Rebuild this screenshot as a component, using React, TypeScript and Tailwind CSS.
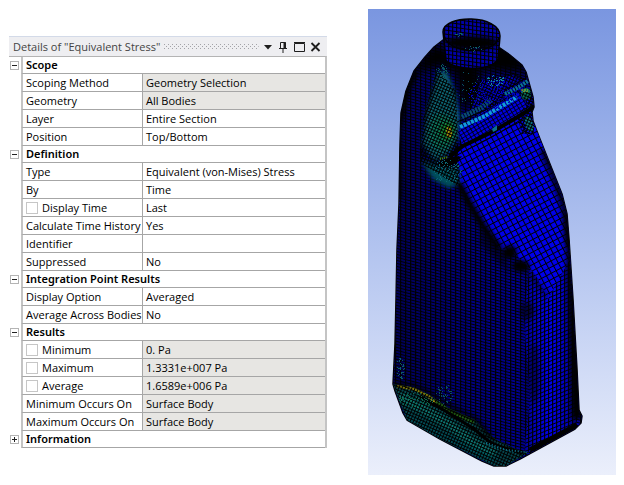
import { useState } from 'react';

interface Row {
  label: string;
  value: string;
  readOnly?: boolean;
  checkable?: boolean;
}

interface Section {
  title: string;
  rows: Row[];
}

const SECTIONS: Section[] = [
  {
    title: 'Scope',
    rows: [
      { label: 'Scoping Method', value: 'Geometry Selection', readOnly: true },
      { label: 'Geometry', value: 'All Bodies', readOnly: true },
      { label: 'Layer', value: 'Entire Section' },
      { label: 'Position', value: 'Top/Bottom' },
    ],
  },
  {
    title: 'Definition',
    rows: [
      { label: 'Type', value: 'Equivalent (von-Mises) Stress' },
      { label: 'By', value: 'Time' },
      { label: 'Display Time', value: 'Last', checkable: true },
      { label: 'Calculate Time History', value: 'Yes' },
      { label: 'Identifier', value: '' },
      { label: 'Suppressed', value: 'No' },
    ],
  },
  {
    title: 'Integration Point Results',
    rows: [
      { label: 'Display Option', value: 'Averaged' },
      { label: 'Average Across Bodies', value: 'No' },
    ],
  },
  {
    title: 'Results',
    rows: [
      { label: 'Minimum', value: '0. Pa', readOnly: true, checkable: true },
      { label: 'Maximum', value: '1.3331e+007 Pa', readOnly: true, checkable: true },
      { label: 'Average', value: '1.6589e+006 Pa', readOnly: true, checkable: true },
      { label: 'Minimum Occurs On', value: 'Surface Body', readOnly: true },
      { label: 'Maximum Occurs On', value: 'Surface Body', readOnly: true },
    ],
  },
  { title: 'Information', rows: [] },
];

function TitleBar() {
  return (
    <div className="flex h-5 items-center border-t border-[#d3dae8] bg-[#eeeef1] pr-1.5 pl-1 text-[#444]">
      <h2 className="text-[11px] leading-4 whitespace-nowrap">Details of "Equivalent Stress"</h2>
      <svg className="mx-1 h-[5px] min-w-0 flex-1" aria-hidden="true">
        <defs>
          <pattern id="grip" width="4" height="4" patternUnits="userSpaceOnUse">
            <rect width="1" height="1" fill="#a3a3a8" />
            <rect x="2" y="2" width="1" height="1" fill="#a3a3a8" />
          </pattern>
        </defs>
        <rect width="100%" height="5" fill="url(#grip)" />
      </svg>
      <div className="flex items-center gap-1 text-[#1e1e1e]">
        <button aria-label="Window position">
          <svg className="block" width="10" height="12" viewBox="0 0 10 12">
            <path d="M1 4h8L5 8.5z" fill="currentColor" />
          </svg>
        </button>
        <button aria-label="Auto hide">
          <svg className="block" width="12" height="12" viewBox="0 0 12 12" fill="none" stroke="currentColor">
            <path d="M3.5 7V1.5h5V7M2 7.5h8M6 7.5V12" />
            <path d="M7.5 1v6" strokeWidth="2" />
          </svg>
        </button>
        <button aria-label="Maximize">
          <svg className="block" width="13" height="12" viewBox="0 0 13 12" fill="none" stroke="currentColor">
            <path d="M1.5 2.5h10v8h-10zM1 1.5h11" />
          </svg>
        </button>
        <button aria-label="Close">
          <svg className="block" width="11" height="12" viewBox="0 0 11 12" stroke="currentColor" strokeWidth="1.8">
            <path d="M1.5 2l8 8M9.5 2l-8 8" />
          </svg>
        </button>
      </div>
    </div>
  );
}

function DetailsPanel() {
  const [collapsed, setCollapsed] = useState<Record<string, boolean>>({ Information: true });

  function toggle(title: string) {
    setCollapsed((prev) => ({ ...prev, [title]: !prev[title] }));
  }

  return (
    <section className="min-w-0 pt-[35px]">
      <TitleBar />
      <table className="w-full table-fixed border-separate border-spacing-0 border-t border-r-2 border-t-[#b4b4b4] border-r-[#c4c4c4] text-left text-[11px] leading-4 text-black">
        <colgroup>
          <col className="w-3" />
          <col className="w-[121px]" />
          <col />
        </colgroup>
        {SECTIONS.map((section) => (
          <tbody key={section.title}>
            <tr className="h-[17px]">
              <td className="p-0">
                <button
                  onClick={() => toggle(section.title)}
                  aria-label={`Toggle ${section.title}`}
                  aria-expanded={!collapsed[section.title]}
                  className="ml-px block size-[9px] border border-[#b4b4b4] bg-white"
                >
                  <svg className="block" width="7" height="7" viewBox="0 0 7 7" stroke="#222">
                    <path d={collapsed[section.title] ? 'M1 3.5h5M3.5 1v5' : 'M1 3.5h5'} />
                  </svg>
                </button>
              </td>
              <th
                colSpan={2}
                className="border-b border-l-2 border-b-[#a6a6a6] border-l-[#c4c4c4] py-0 pl-[3px] font-['Noto_Sans','Open_Sans',sans-serif] font-semibold"
              >
                {section.title}
              </th>
            </tr>
            {!collapsed[section.title] &&
              section.rows.map((row) => (
                <tr key={row.label} className="h-[18px]">
                  <td className="p-0" />
                  <th className="border-b border-l-2 border-b-[#a6a6a6] border-l-[#c4c4c4] py-0 pl-[3px] font-medium whitespace-nowrap">
                    {row.checkable ? (
                      <label className="flex items-center gap-1">
                        <input type="checkbox" className="size-3 appearance-none border border-[#c6c6c6] bg-white checked:bg-[#555]" />
                        {row.label}
                      </label>
                    ) : (
                      row.label
                    )}
                  </th>
                  <td
                    className={`border-b border-l border-[#a6a6a6] py-0 pl-[3px] font-medium whitespace-nowrap ${
                      row.readOnly ? 'bg-[#e7e6e3]' : 'bg-white'
                    }`}
                  >
                    {row.value}
                  </td>
                </tr>
              ))}
          </tbody>
        ))}
      </table>
    </section>
  );
}

const BODY =
  'M443 41 L434 48 L425 58 L414 72 L406 92 L401 114 L400 145 L399 205 L397 250 L396 300 L395 345 L393 385 L395 392 L403 414 L407 421 L440 440 L482 462 L494 467 L506 467 L520 460 L575 430 L581 424 L582 417 L579 411 L577 370 L573 300 L569 240 L567 215 L562 195 L550 165 L540 140 L533 122 L532 113 L534 108 L533 98 L526 73 L522 66 L510 56 L500 49 Z';
const GRIP_FACE =
  'M457 153 L463 146 L492 133 L531 111 L533 122 L550 165 L562 195 L567 215 L569 262 L548 300 L535 275 L515 255 L498 248 L481 222 L465 195 L459 180 Z';
const SIDE_FACE = 'M512 240 L569 225 L573 300 L577 370 L579 412 L575 430 L524 455 L530 400 L524 320 L529 270 Z';
const BASE = 'M393 385 L413 388 L430 396 L448 409 L475 421 L495 440 L520 452 L529 453 L506 467 L494 467 L440 440 L407 421 Z';
const HANDLE = 'M458 133 L463 126 L522 88 L532 103 L529 111 L463 148 Z';

// small repeatable generator so that the speckles stay put between renders
function speckles(seed: number, count: number, cx: number, cy: number, rx: number, ry: number) {
  let s = seed;
  const next = () => {
    s = (s * 16807) % 2147483647;
    return s / 2147483647;
  };
  const points: [number, number][] = [];
  for (let i = 0; i < count; i++) {
    const angle = next() * Math.PI * 2;
    const r = Math.sqrt(next());
    points.push([Math.round(cx + Math.cos(angle) * r * rx), Math.round(cy + Math.sin(angle) * r * ry)]);
  }
  return points;
}

const SPECKLES = [
  { color: '#1283a0', points: speckles(11, 45, 495, 81, 9, 6) },
  { color: '#0a5060', points: speckles(29, 30, 469, 88, 12, 18) },
  { color: '#0c6674', points: speckles(7, 80, 446, 172, 15, 12) },
  { color: '#0a5660', points: speckles(3, 40, 442, 72, 6, 7) },
  { color: '#0c5c68', points: speckles(41, 40, 400, 370, 4, 11) },
  { color: '#0f6a48', points: speckles(17, 60, 416, 400, 18, 8) },
  { color: '#0a4f60', points: speckles(23, 50, 444, 395, 9, 10) },
  { color: '#0000c0', points: speckles(13, 160, 492, 95, 24, 15) },
];

const NECK_SPECKLES = [...speckles(31, 16, 473, 49, 9, 3), ...speckles(43, 10, 459, 35, 4, 2)];

function BottleMesh() {
  return (
    <svg className="block h-auto w-full" viewBox="368 10 248 466" role="img" aria-label="Equivalent stress on a meshed bottle">
      <defs>
        <clipPath id="body">
          <path d={BODY} />
        </clipPath>
        <clipPath id="base">
          <path d={BASE} />
        </clipPath>
        <filter id="soft" x="-50%" y="-50%" width="200%" height="200%">
          <feGaussianBlur stdDeviation="4" />
        </filter>
        <filter id="softer" x="-50%" y="-50%" width="200%" height="200%">
          <feGaussianBlur stdDeviation="2" />
        </filter>
        <linearGradient id="front" x1="0" x2="1">
          <stop offset="0" stopColor="#000058" />
          <stop offset="0.4" stopColor="#000082" />
          <stop offset="1" stopColor="#0000a0" />
        </linearGradient>
        <linearGradient id="side" x1="0" x2="1">
          <stop offset="0" stopColor="#000090" />
          <stop offset="0.3" stopColor="#0000b0" />
          <stop offset="0.55" stopColor="#0000f0" />
          <stop offset="0.8" stopColor="#0000c0" />
          <stop offset="1" stopColor="#000060" />
        </linearGradient>
        <pattern id="mesh-front" width="5" height="3" patternUnits="userSpaceOnUse" patternTransform="skewY(14)">
          <path d="M0 .5h5M.5 0v3" stroke="#000" strokeWidth="1.2" />
        </pattern>
        <pattern id="mesh-side" width="4" height="4" patternUnits="userSpaceOnUse" patternTransform="skewY(-22)">
          <path d="M0 .5h4M.5 0v4" stroke="#000" strokeWidth="1.1" />
        </pattern>
        <pattern id="mesh-grip" width="5.5" height="5.5" patternUnits="userSpaceOnUse" patternTransform="rotate(-28)">
          <path d="M0 .5h6M.5 0v6" stroke="#000" strokeWidth="1" />
        </pattern>
        <pattern id="mesh-fine" width="3" height="3" patternUnits="userSpaceOnUse" patternTransform="rotate(24)">
          <path d="M0 .5h3M.5 0v3" stroke="#000" strokeWidth="1" />
        </pattern>
        <pattern id="mesh-handle" width="4" height="3.5" patternUnits="userSpaceOnUse" patternTransform="rotate(-31)">
          <path d="M0 .5h4M.5 0v4" stroke="#000" strokeWidth="0.8" />
        </pattern>
        <pattern id="mesh-neck" width="4" height="4" patternUnits="userSpaceOnUse" patternTransform="skewY(8)">
          <path d="M0 .5h4M.5 0v4" stroke="#000" strokeWidth="1.1" />
        </pattern>
      </defs>

      <path d={BODY} fill="#000" stroke="#000" strokeWidth="1.5" strokeLinejoin="round" />
      <g clipPath="url(#body)">
        {/* front wall */}
        <path d={BODY} fill="url(#front)" />
        <path d={BODY} fill="url(#mesh-front)" />

        {/* narrow side */}
        <path d={SIDE_FACE} fill="url(#side)" />
        <path d={SIDE_FACE} fill="url(#mesh-side)" />

        {/* recess below the handle */}
        <path d={GRIP_FACE} fill="#0000ea" />
        <path d={GRIP_FACE} fill="url(#mesh-grip)" />
        <g fill="none" stroke="#000" filter="url(#softer)">
          <path d="M459 184 L468 202 L484 228 L500 250" strokeWidth="7" />
          <path d="M543 150 L556 182 L565 210 L570 248" strokeWidth="8" opacity="0.8" />
          <path d="M530 275 L548 298" strokeWidth="4" opacity="0.5" />
        </g>

        {/* shoulder */}
        <g filter="url(#soft)">
          <path d="M434 45 L408 76 L440 67 L466 80 L480 72 L523 74 L535 92 L520 55 L500 42 L470 60 Z" fill="#000" />
          <path d="M456 76 L482 75 L476 98 L463 114 Z" fill="#000" />
        </g>
        <path d="M480 84 L512 76 L524 82 L492 104 L470 114 Z" fill="#0000c8" opacity="0.8" />
        <path d="M478 84 L512 74 L526 80 L492 106 L468 116 Z" fill="url(#mesh-fine)" />
        <path d="M398 200 V130 L407 90 L416 72" stroke="#000" strokeWidth="7" fill="none" filter="url(#softer)" />

        {/* stressed zone left of the handle */}
        <g filter="url(#softer)">
          <path d="M438 73 L447 74 L455 95 L459 117 L458 138 L448 155 L435 162 L423 145 L427 115 Z" fill="#086675" />
          <ellipse cx="442" cy="133" rx="13" ry="18" fill="#0b7860" />
          <path d="M421 161 L440 167 L459 169 L459 184 L449 189 L433 180 Z" fill="#06505c" />
        </g>
        <ellipse cx="447" cy="132" rx="7" ry="9" fill="#158c2c" filter="url(#softer)" />
        <ellipse cx="449" cy="133" rx="3" ry="6" fill="#a8900c" />
        <path d="M437 69 L456 92 L460 188 L420 164 L423 120 Z" fill="url(#mesh-fine)" />
        <path d="M440 165 q10 -6 18 -6 l-10 8 z" fill="#000" stroke="#000" strokeWidth="3" />
        <path d="M440 160 l8 -2" stroke="#4e8a10" strokeWidth="2" strokeDasharray="1 1" />

        {/* handle */}
        <path d={HANDLE} fill="#0000e4" />
        <path d={HANDLE} fill="url(#mesh-handle)" />
        <path d="M460 128 L485 117 L517 98" stroke="#119bd8" strokeWidth="4" strokeDasharray="3 1" fill="none" />
        <path d="M462 118 L481 109 L491 101" stroke="#084e70" strokeWidth="5" strokeDasharray="2 1" fill="none" />
        <path d="M505 95 L519 88 L528 82" stroke="#0b7398" strokeWidth="4" strokeDasharray="2 1" fill="none" />
        <path d="M457 123 L488 110 L520 91 M505 91 L526 79" stroke="#000" fill="none" />
        <path d="M450 157 L463 147 L492 133 L516 119 L534 108" stroke="#000" strokeWidth="4" fill="none" />
        <path d="M463 153 L492 138 L524 119" stroke="#000" strokeWidth="1" fill="none" />
        <ellipse cx="526" cy="95" rx="5" ry="6" fill="#08705c" />
        <path d="M521 91 h7 M523 93 h6" stroke="#c5b010" strokeWidth="1" strokeDasharray="2 1" />
        <ellipse cx="529" cy="125" rx="4" ry="8" fill="#0a7484" transform="rotate(-20 529 125)" />
        <path d="M519 93 h15 v42 h-12 l-5 -18 l10 -12 z" fill="url(#mesh-fine)" />
        <path d="M492 130 l5 -4 v5 l-4 2z" fill="#0a6f90" />

        {/* pinch points along the edge of the recess */}
        <g fill="#000" filter="url(#softer)">
          <ellipse cx="510" cy="253" rx="7" ry="7" />
          <ellipse cx="521" cy="267" rx="9" ry="6" />
          <ellipse cx="527" cy="312" rx="7" ry="9" opacity="0.6" />
          <ellipse cx="534" cy="375" rx="6" ry="30" opacity="0.4" />
          <path d="M569 205 L582 420 L572 420 L565 215 Z" />
          <path d="M480 228 L505 255 L510 275 L480 245 Z" opacity="0.5" />
        </g>

        {/* base */}
        <path d={BASE} fill="#06444c" />
        <g clipPath="url(#base)">
          <g filter="url(#softer)" fill="none">
            <path d="M399 397 L425 411 L450 426 L475 445 L495 455" stroke="#0b7a74" strokeWidth="9" />
            <path d="M407 417 L440 435 L495 462" stroke="#05505a" strokeWidth="6" />
          </g>
          <path d="M397 387 L414 390 L428 397 L441 407" stroke="#a49a10" strokeWidth="3" fill="none" />
          <path d="M436 403 L455 414 L474 423" stroke="#276f16" strokeWidth="5" fill="none" />
          <path d={BASE} fill="url(#mesh-fine)" />
          <path d="M420 397 L447 413 L474 430 L492 445 L523 454" stroke="#000" strokeWidth="3" fill="none" />
          <path d="M449 407 L480 416 L496 440" stroke="#000" strokeWidth="8" fill="none" filter="url(#softer)" />
          <path d="M486 444 L506 451 L527 453" stroke="#0f7a94" strokeWidth="2" strokeDasharray="1 2" fill="none" />
        </g>
        <path d="M393 385 L413 386 L432 395 L452 408 L476 420 L490 437" stroke="#000" strokeWidth="3" fill="none" filter="url(#softer)" />
        <path d="M530 451 L577 426" stroke="#000" strokeWidth="5" />

        {SPECKLES.map((group, i) => (
          <g key={i} fill={group.color}>
            {group.points.map(([x, y], j) => (
              <rect key={j} x={x} y={y} width="1" height="1" />
            ))}
          </g>
        ))}
      </g>

      {/* neck */}
      <path d="M443 33 C443 15 500 15 500 37 L498 60 C492 73 452 72 446 61 Z" fill="#0000a8" stroke="#000" strokeWidth="1.5" />
      <path d="M443 33 C443 15 500 15 500 37 L498 60 C492 73 452 72 446 61 Z" fill="url(#mesh-neck)" />
      <path d="M445 42 C449 36 494 35 498 43 C494 53 451 55 445 42 Z" fill="#000" filter="url(#softer)" />
      <path d="M444 37 C450 56 493 56 499 39" stroke="#000" strokeWidth="1.5" fill="none" />
      {NECK_SPECKLES.map(([x, y], i) => (
        <rect key={i} x={x} y={y} width="1" height="1" fill="#0e5f6a" />
      ))}
    </svg>
  );
}

export default function App() {
  return (
    <main className="grid grid-cols-[318fr_248fr] items-start gap-[41px] bg-white pt-px pr-2 pb-2 pl-[9px] font-['Open_Sans','Noto_Sans',sans-serif]">
      <DetailsPanel />
      <section className="mt-2 min-w-0 bg-linear-to-b from-[#7a96e0] to-[#ebeffb]">
        <BottleMesh />
      </section>
    </main>
  );
}
